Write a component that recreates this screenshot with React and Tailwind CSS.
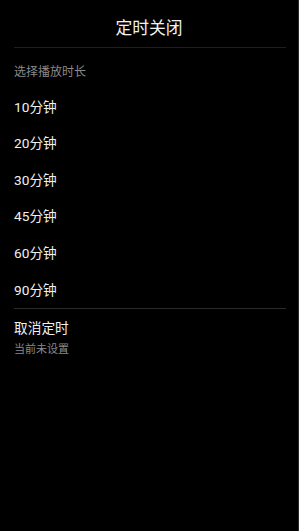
export default function App() {
  const items = ["10分钟", "20分钟", "30分钟", "45分钟", "60分钟", "90分钟"];
  return (
    <div
      className="w-[299px] h-[531px] bg-black border-r border-[#2c2c2c] flex flex-col"
      style={{ fontFamily: 'Roboto, "Noto Sans CJK SC", sans-serif' }}
    >
      <div className="mt-[18px] text-center text-[16.8px] leading-[20px] text-[#f2f2f2]">定时关闭</div>
      <div className="mt-[9px] ml-[14px] mr-[12px] h-px bg-[#1f1f1f]" />
      <div className="mt-[16px] px-[14px] text-[12px] leading-[16px] text-[#8a8a8a]">选择播放时长</div>
      <div className="mt-[8.7px] flex flex-col">
        {items.map((t) => (
          <div key={t} className="h-[36.6px] px-[14px] flex items-center text-[13.7px] text-[#f0f0f0]">
            {t}
          </div>
        ))}
      </div>
      <div className="ml-[14px] mr-[12px] h-px bg-[#2a2a2a]" />
      <div className="mt-[10px] px-[14px] text-[13.7px] leading-[18px] text-[#f0f0f0]">取消定时</div>
      <div className="mt-[6px] px-[14px] text-[11px] leading-[14px] text-[#8a8a8a]">当前未设置</div>
    </div>
  );
}
